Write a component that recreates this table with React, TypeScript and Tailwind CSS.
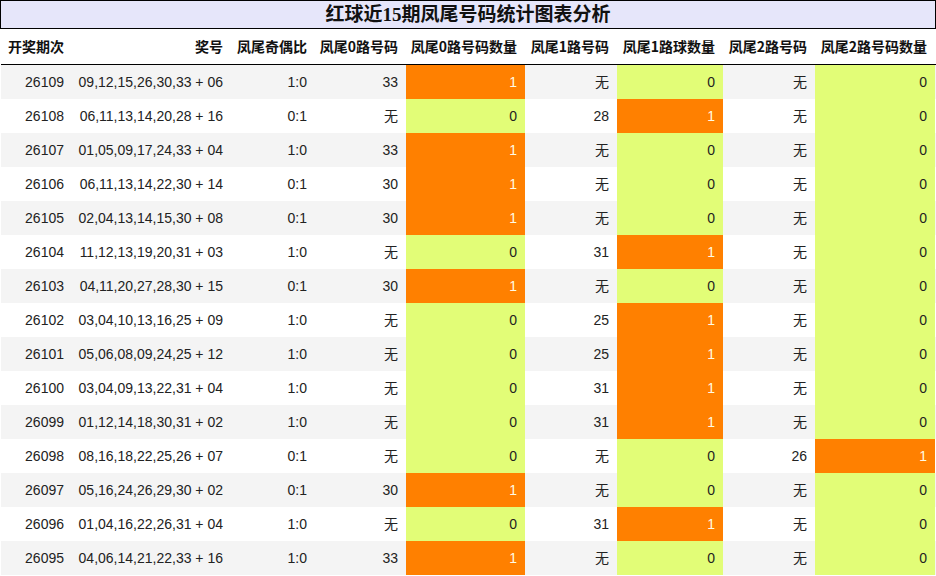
import React from "react";

type Row = [string, string, string, string, number, string, number, string, number];

const rows: Row[] = [
  ["26109", "09,12,15,26,30,33 + 06", "1:0", "33", 1, "无", 0, "无", 0],
  ["26108", "06,11,13,14,20,28 + 16", "0:1", "无", 0, "28", 1, "无", 0],
  ["26107", "01,05,09,17,24,33 + 04", "1:0", "33", 1, "无", 0, "无", 0],
  ["26106", "06,11,13,14,22,30 + 14", "0:1", "30", 1, "无", 0, "无", 0],
  ["26105", "02,04,13,14,15,30 + 08", "0:1", "30", 1, "无", 0, "无", 0],
  ["26104", "11,12,13,19,20,31 + 03", "1:0", "无", 0, "31", 1, "无", 0],
  ["26103", "04,11,20,27,28,30 + 15", "0:1", "30", 1, "无", 0, "无", 0],
  ["26102", "03,04,10,13,16,25 + 09", "1:0", "无", 0, "25", 1, "无", 0],
  ["26101", "05,06,08,09,24,25 + 12", "1:0", "无", 0, "25", 1, "无", 0],
  ["26100", "03,04,09,13,22,31 + 04", "1:0", "无", 0, "31", 1, "无", 0],
  ["26099", "01,12,14,18,30,31 + 02", "1:0", "无", 0, "31", 1, "无", 0],
  ["26098", "08,16,18,22,25,26 + 07", "0:1", "无", 0, "无", 0, "26", 1],
  ["26097", "05,16,24,26,29,30 + 02", "0:1", "30", 1, "无", 0, "无", 0],
  ["26096", "01,04,16,22,26,31 + 04", "1:0", "无", 0, "31", 1, "无", 0],
  ["26095", "04,06,14,21,22,33 + 16", "1:0", "33", 1, "无", 0, "无", 0],
];

const headers = [
  "开奖期次",
  "奖号",
  "凤尾奇偶比",
  "凤尾0路号码",
  "凤尾0路号码数量",
  "凤尾1路号码",
  "凤尾1路球数量",
  "凤尾2路号码",
  "凤尾2路号码数量",
];

const cols = "grid grid-cols-[71px_159px_84px_91px_119px_92px_106px_92px_120px]";

function CountCell({ n }: { n: number }) {
  return n === 1 ? (
    <div className="flex items-center justify-end bg-[#ff8000] pr-2 text-[#fffbe6]">1</div>
  ) : (
    <div className="flex items-center justify-end bg-[#e2fd77] pr-2">0</div>
  );
}

export default function App() {
  return (
    <div className="w-[936px] h-[576px] overflow-hidden bg-white text-[#222] font-['Liberation_Sans','Noto_Sans_CJK_SC',sans-serif]">
      <div className="flex h-[29px] w-[936px] items-center justify-center border border-black bg-[#e6e6fa] text-[19px] font-bold leading-none text-[#111] font-['Liberation_Serif','Noto_Sans_CJK_SC',serif]">
        红球近15期凤尾号码统计图表分析
      </div>
      <div className={`${cols} ml-px h-[36px] border-b border-black font-['Noto_Sans_CJK_SC',sans-serif] text-[14px] font-bold text-[#111]`}>
        {headers.map((h) => (
          <div key={h} className="flex items-center justify-end pr-2 whitespace-nowrap">
            {h}
          </div>
        ))}
      </div>
      <div className="ml-px text-[14px]">
        {rows.map((r, i) => (
          <div key={r[0]} className={`${cols} h-[34px] ${i % 2 === 0 ? "bg-[#f4f4f4]" : "bg-white"}`}>
            <div className="flex items-center justify-end pr-2">{r[0]}</div>
            <div className="flex items-center justify-end pr-2 whitespace-nowrap">{r[1]}</div>
            <div className="flex items-center justify-end pr-2">{r[2]}</div>
            <div className="flex items-center justify-end pr-2">{r[3]}</div>
            <CountCell n={r[4]} />
            <div className="flex items-center justify-end pr-2">{r[5]}</div>
            <CountCell n={r[6]} />
            <div className="flex items-center justify-end pr-2">{r[7]}</div>
            <CountCell n={r[8]} />
          </div>
        ))}
      </div>
    </div>
  );
}
